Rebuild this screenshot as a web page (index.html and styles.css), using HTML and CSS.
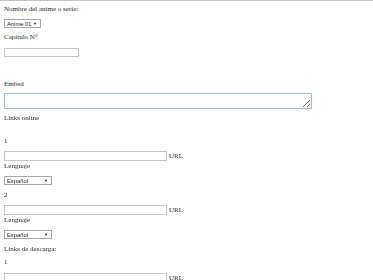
FILE: index.html
```html
<!DOCTYPE html>
<html lang="es">
<head>
    <meta charset="UTF-8">
    <title>Nuevo capítulo</title>
    <link rel="stylesheet" href="styles.css">
</head>
<body>

    <form class="episode-form">
        <p class="lbl first">Nombre del anime o serie:</p>
        <div class="pick pick-anime">
            <select><option>Anime 01</option></select>
            <span class="arrow">&#9660;</span>
        </div>

        <p class="lbl">Capítulo N°</p>
        <input type="text" class="field field-short">

        <p class="lbl lbl-far">Embed</p>
        <textarea class="embed" autofocus></textarea>

        <p class="lbl">Links online</p>

        <p class="lbl num">1</p>
        <div class="url-row"><input type="text" class="field field-url"><span>URL</span></div>
        <p class="lbl lang">Lenguaje</p>
        <div class="pick pick-lang">
            <select><option>Español</option></select>
            <span class="arrow">&#9660;</span>
        </div>

        <p class="lbl two">2</p>
        <div class="url-row"><input type="text" class="field field-url"><span>URL</span></div>
        <p class="lbl lang">Lenguaje</p>
        <div class="pick pick-lang">
            <select><option>Español</option></select>
            <span class="arrow">&#9660;</span>
        </div>

        <p class="lbl two">Links de descarga:</p>

        <p class="lbl">1</p>
        <div class="url-row last"><input type="text" class="field field-url"><span>URL</span></div>
    </form>

</body>
</html>
```

FILE: styles.css
```css
body {
    margin: 0;
    border-top: 1px solid #c4c4c4;
    font-family: 'Liberation Serif', serif;
    font-size: 7px;
    color: #2a2a2a;
    background: #fff;
}
.episode-form {
    padding: 0 4px;
    display: flex;
    flex-direction: column;
    align-items: flex-start;
}
.lbl {
    margin: 5px 0 0;
    line-height: 8px;
    height: 8px;
}
.lbl.first {
    margin-top: 4px;
}
.lbl.lbl-far {
    margin-top: 23px;
}
.lbl.num {
    margin-top: 15px;
}
.lbl.lang {
    margin-top: 1px;
}
.lbl.two {
    margin-top: 6px;
}
.pick {
    position: relative;
    margin-top: 6px;
    height: 9px;
    box-sizing: border-box;
    border: 1px solid #a6a6a6;
    background: #fff;
}
.pick select {
    appearance: none;
    -webkit-appearance: none;
    border: none;
    background: transparent;
    font-family: 'Liberation Sans', Arial, sans-serif;
    font-size: 5.8px;
    color: #222;
    height: 7px;
    line-height: 7px;
    padding: 0 0 0 2px;
    margin: 0;
    width: 100%;
    outline: none;
}
.pick .arrow {
    position: absolute;
    right: 3px;
    top: 1px;
    font-size: 4px;
    line-height: 5px;
    color: #111;
    pointer-events: none;
}
.pick-anime {
    width: 37px;
}
.pick-lang {
    width: 48px;
}
.field {
    box-sizing: border-box;
    height: 9px;
    border: 1px solid #c5c5c5;
    padding: 0;
    margin: 7px 0 0;
    background: #fff;
}
.field-short {
    width: 75px;
}
.embed {
    box-sizing: border-box;
    margin-top: 5px;
    width: 308px;
    height: 16px;
    border: 1px solid #a7bbdd;
    border-radius: 1px;
    padding: 1px 2px;
    font-size: 7px;
    resize: vertical;
    outline: none;
    box-shadow: 0 0 1px #c3d1ec;
}
.url-row {
    display: flex;
    align-items: center;
    gap: 2px;
    margin-top: 6px;
}
.url-row.last {
    margin-top: 7px;
}
.url-row .field {
    margin: 0;
    height: 10px;
}
.field-url {
    width: 163px;
}
```
